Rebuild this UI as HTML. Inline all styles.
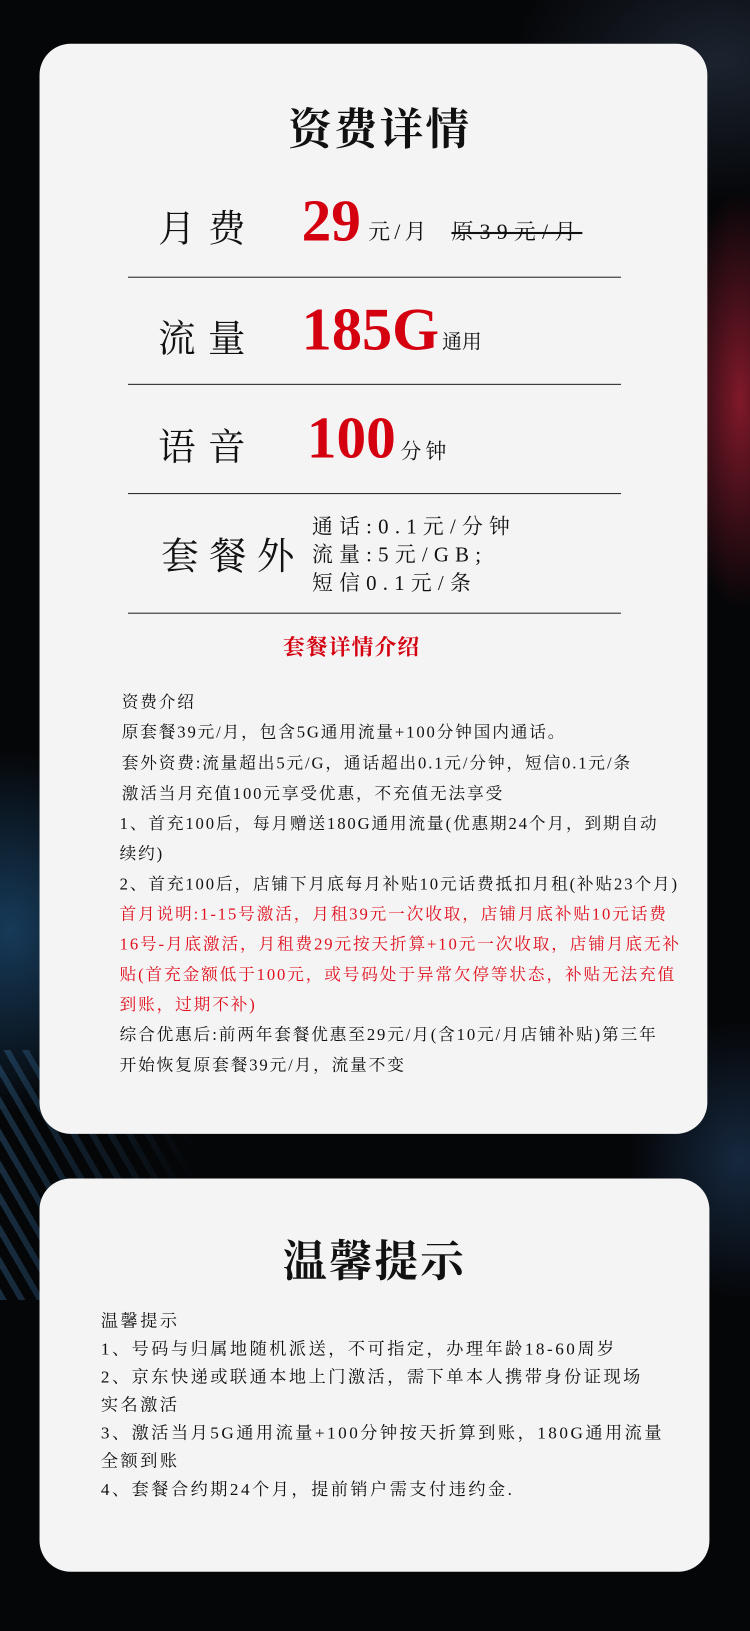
<!DOCTYPE html>
<html><head><meta charset="utf-8"><style>
*{margin:0;padding:0;box-sizing:border-box}
body{width:750px;height:1631px;overflow:hidden;position:relative;background:#050608;font-family:"Liberation Serif","Noto Serif CJK SC",serif;color:#111}
.bg{position:absolute;inset:0;background:
radial-gradient(ellipse 90px 300px at 740px 400px,rgba(230,40,70,.55),transparent 70%),
radial-gradient(ellipse 200px 260px at 10px 930px,rgba(40,110,170,.5),transparent 70%),
radial-gradient(ellipse 160px 200px at 740px 1160px,rgba(60,120,190,.3),transparent 70%),
radial-gradient(ellipse 300px 200px at 720px 60px,rgba(70,90,120,.35),transparent 70%),
#050608}
.stripes{position:absolute;left:0;top:1050px;width:200px;height:250px;background:repeating-linear-gradient(60deg,rgba(60,120,170,.35) 0 6px,transparent 6px 16px);-webkit-mask:linear-gradient(90deg,#000,transparent);mask:linear-gradient(90deg,#000,transparent)}
.wrap{position:absolute;left:0;top:0;width:721px;height:1568px;transform:scale(1.0402);transform-origin:0 0}
.card{position:absolute;background:#f4f4f4;border-radius:30px}
.t{position:absolute;white-space:nowrap}
.red{color:#d40010}
.line{position:absolute;left:123px;width:474px;height:1px;background:#222}
.p{position:absolute;left:0;font-size:16px;white-space:nowrap;letter-spacing:1.8px}
.q{position:absolute;left:0;font-size:16.5px;white-space:nowrap;letter-spacing:2.4px}
</style></head><body>
<div class="bg"></div>
<div class="stripes"></div>
<div class="wrap">
<div class="card" style="left:38px;top:42px;width:642px;height:1048px"></div>
<div class="card" style="left:38px;top:1133px;width:644px;height:378px"></div>

<div class="t" style="left:277px;top:92px;font-size:42px;font-weight:bold;letter-spacing:2px">资费详情</div>

<div class="t" style="left:152px;top:192px;font-size:36px;letter-spacing:12px">月费</div>
<div class="t red" style="left:290px;top:180px;font-size:57px;font-weight:bold">29</div>
<div class="t" style="left:354px;top:207px;font-size:21px;letter-spacing:4px">元/月</div>
<div class="t" style="left:434px;top:207px;font-size:21px;letter-spacing:6px;text-decoration:line-through">原39元/月</div>
<div class="line" style="top:266px"></div>

<div class="t" style="left:152px;top:298px;font-size:36px;letter-spacing:12px">流量</div>
<div class="t red" style="left:290px;top:283px;font-size:58px;font-weight:bold">185G</div>
<div class="t" style="left:425px;top:314px;font-size:19px">通用</div>
<div class="line" style="top:369px"></div>

<div class="t" style="left:152px;top:402px;font-size:36px;letter-spacing:12px">语音</div>
<div class="t red" style="left:295px;top:389px;font-size:57px;font-weight:bold">100</div>
<div class="t" style="left:385px;top:418px;font-size:20px;letter-spacing:4px">分钟</div>
<div class="line" style="top:474px"></div>

<div class="t" style="left:155px;top:507px;font-size:36px;letter-spacing:10px">套餐外</div>
<div class="t" style="left:300px;top:494px;font-size:20px;letter-spacing:6px;line-height:27px">通话:0.1元/分钟<br>流量:5元/GB;<br>短信0.1元/条</div>
<div class="line" style="top:589px"></div>

<div class="t red" style="left:272px;top:606px;font-size:21px;font-weight:bold;letter-spacing:1px">套餐详情介绍</div>

<div style="position:absolute;left:115px;top:662px;width:560px">
<div class="p" style="top:0;left:2px">资费介绍</div>
<div class="p" style="top:29px;left:2px">原套餐39元/月，包含5G通用流量+100分钟国内通话。</div>
<div class="p" style="top:59px;left:2px">套外资费:流量超出5元/G，通话超出0.1元/分钟，短信0.1元/条</div>
<div class="p" style="top:88px;left:2px">激活当月充值100元享受优惠，不充值无法享受</div>
<div class="p" style="top:117px">1、首充100后，每月赠送180G通用流量(优惠期24个月，到期自动</div>
<div class="p" style="top:146px">续约)</div>
<div class="p" style="top:175px">2、首充100后，店铺下月底每月补贴10元话费抵扣月租(补贴23个月)</div>
<div class="p" style="top:204px;color:#e0101e">首月说明:1-15号激活，月租39元一次收取，店铺月底补贴10元话费</div>
<div class="p" style="top:233px;color:#e0101e">16号-月底激活，月租费29元按天折算+10元一次收取，店铺月底无补</div>
<div class="p" style="top:262px;color:#e0101e">贴(首充金额低于100元，或号码处于异常欠停等状态，补贴无法充值</div>
<div class="p" style="top:291px;color:#e0101e">到账，过期不补)</div>
<div class="p" style="top:320px">综合优惠后:前两年套餐优惠至29元/月(含10元/月店铺补贴)第三年</div>
<div class="p" style="top:349px">开始恢复原套餐39元/月，流量不变</div>
</div>

<div class="t" style="left:272px;top:1180px;font-size:42px;font-weight:bold;letter-spacing:2px">温馨提示</div>
<div style="position:absolute;left:97px;top:1256px;width:580px">
<div class="q" style="top:0">温馨提示</div>
<div class="q" style="top:27px">1、号码与归属地随机派送，不可指定，办理年龄18-60周岁</div>
<div class="q" style="top:54px">2、京东快递或联通本地上门激活，需下单本人携带身份证现场</div>
<div class="q" style="top:81px">实名激活</div>
<div class="q" style="top:108px">3、激活当月5G通用流量+100分钟按天折算到账，180G通用流量</div>
<div class="q" style="top:135px">全额到账</div>
<div class="q" style="top:162px">4、套餐合约期24个月，提前销户需支付违约金.</div>
</div>
</div>
</body></html>
